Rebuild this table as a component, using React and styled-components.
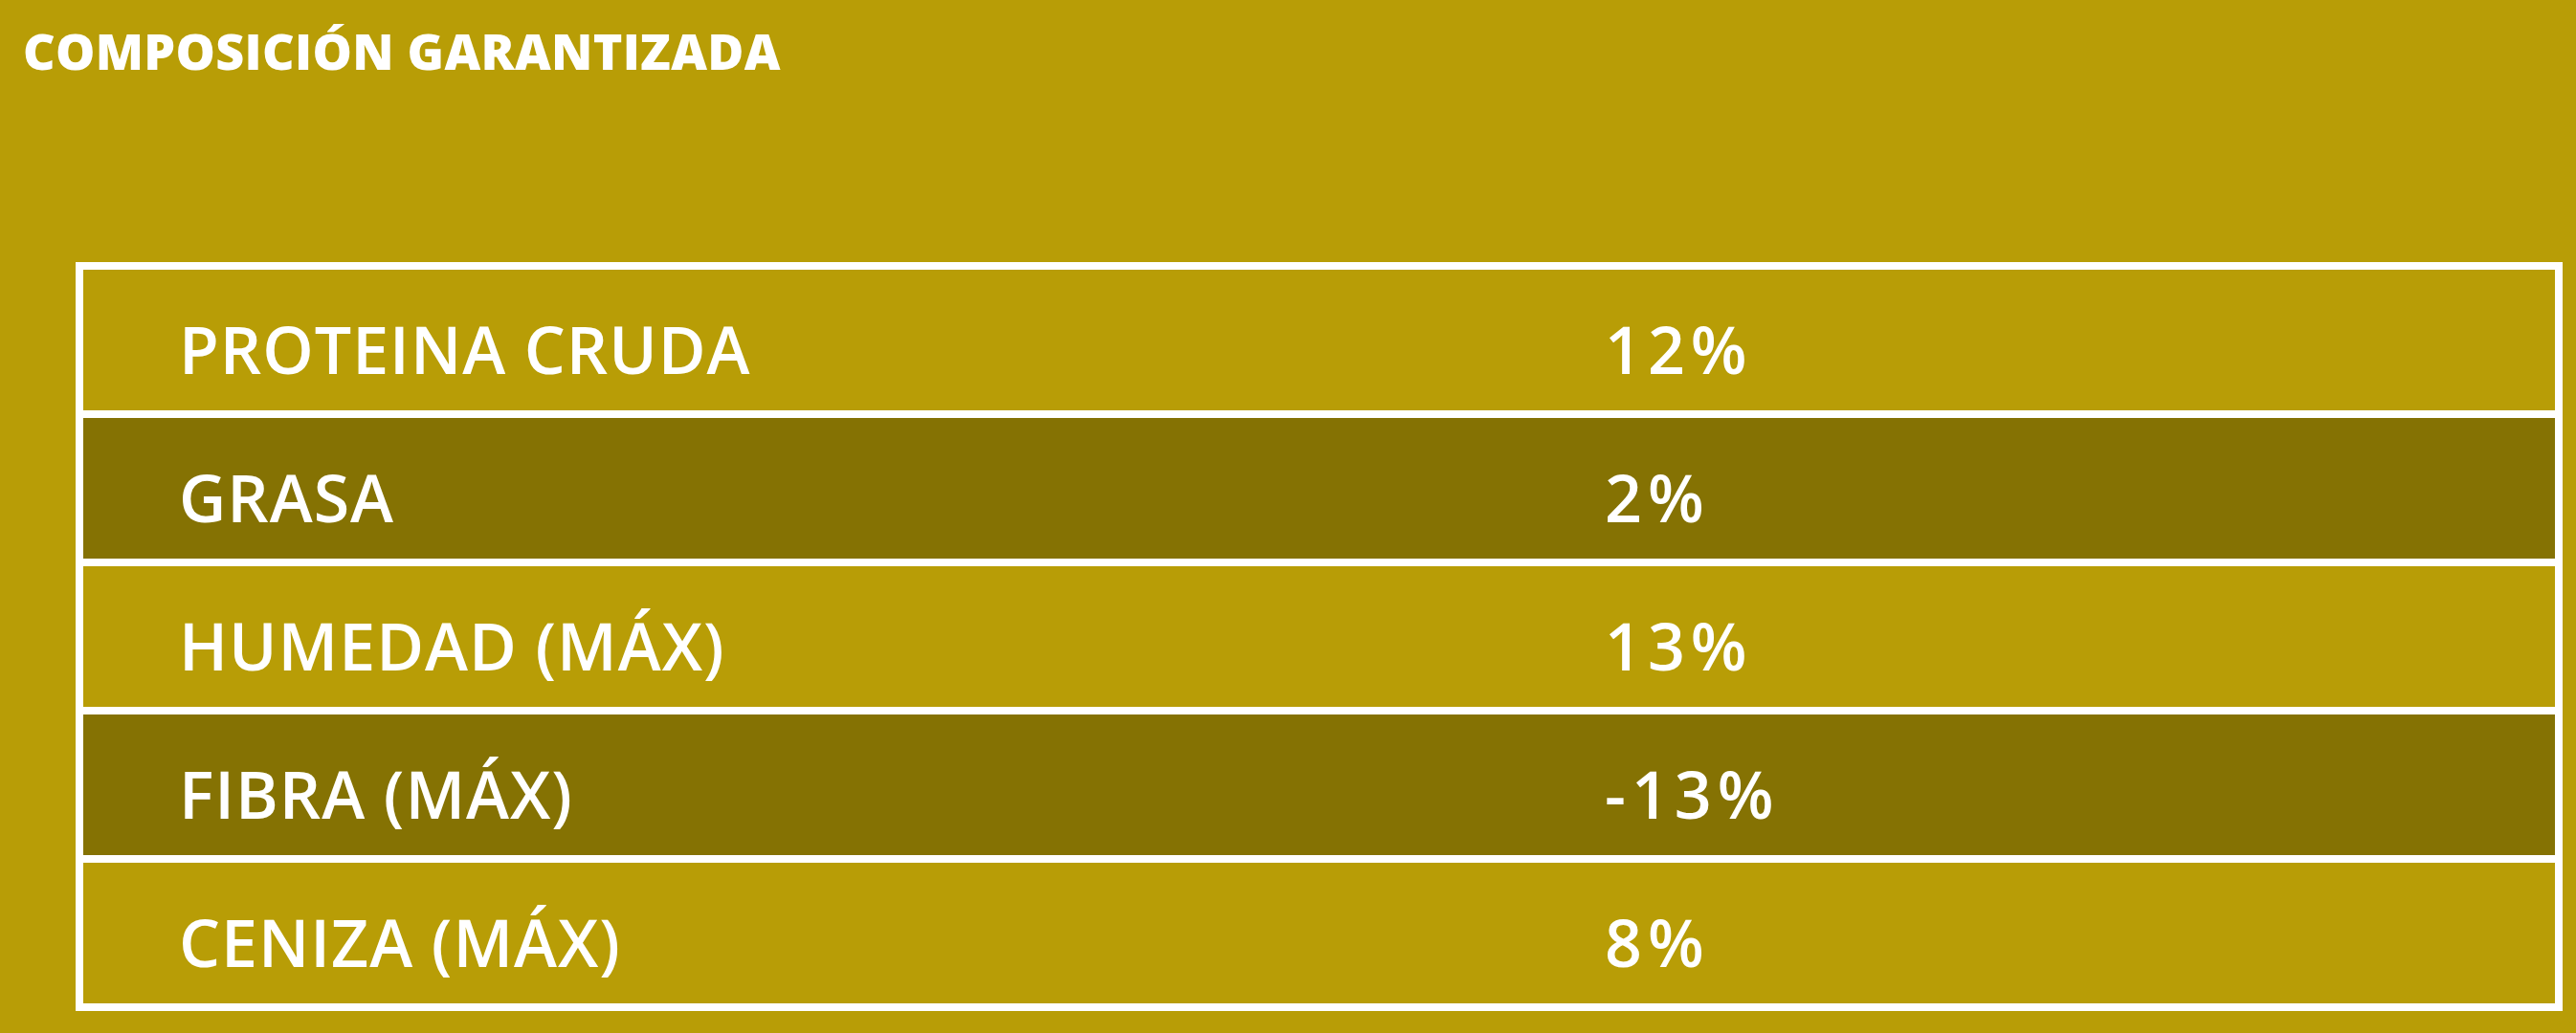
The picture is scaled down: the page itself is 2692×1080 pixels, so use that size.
import React from "react";
import styled, { createGlobalStyle } from "styled-components";

const GlobalStyle = createGlobalStyle`
  html, body {
    margin: 0;
    padding: 0;
    background: #b89d06;
  }
  body {
    font-family: "Open Sans", "Liberation Sans", sans-serif;
    color: #ffffff;
  }
`;

const Page = styled.div`
  width: 2692px;
  height: 1080px;
  box-sizing: border-box;
  padding: 17px 14px 0 24px;
  background: #b89d06;
  overflow: hidden;
`;

const Title = styled.h2`
  margin: 0;
  font-size: 52px;
  font-weight: 800;
  letter-spacing: 0.3px;
  line-height: normal;
  text-transform: uppercase;
`;

const Table = styled.div`
  margin: 186px 0 0 55px;
  border: 8px solid #ffffff;
  display: flex;
  flex-direction: column;
  gap: 8px;
  background: #ffffff;
`;

const Row = styled.div`
  display: grid;
  grid-template-columns: 1490px 1fr;
  height: 147px;
  background: ${(p) => (p.$dark ? "#857203" : "#b89d06")};
`;

const Cell = styled.div`
  display: flex;
  align-items: center;
  box-sizing: border-box;
  padding: 18px 0 0 100px;
  font-size: 68px;
  font-weight: 600;
  letter-spacing: ${(p) => (p.$value ? "6px" : "1px")};
  line-height: 1;
  white-space: nowrap;
`;

const rows = [
  { name: "PROTEINA CRUDA", value: "12%" },
  { name: "GRASA", value: "2%" },
  { name: "HUMEDAD (MÁX)", value: "13%" },
  { name: "FIBRA (MÁX)", value: "-13%" },
  { name: "CENIZA (MÁX)", value: "8%" },
];

export default function App() {
  return (
    <>
      <GlobalStyle />
      <Page>
        <Title>Composición garantizada</Title>
        <Table>
          {rows.map((row, i) => (
            <Row key={row.name} $dark={i % 2 === 1}>
              <Cell>{row.name}</Cell>
              <Cell $value>{row.value}</Cell>
            </Row>
          ))}
        </Table>
      </Page>
    </>
  );
}
